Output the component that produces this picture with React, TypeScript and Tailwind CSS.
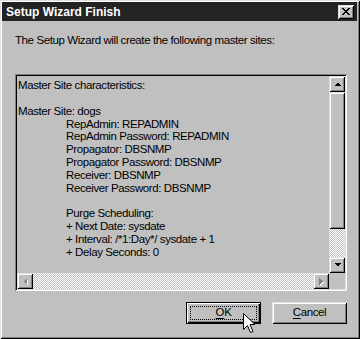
import React from "react";

const FONT = "font-['Liberation_Sans',Arial,sans-serif] text-[11.5px] tracking-[-0.4px]";

const RAISED =
  "shadow-[inset_1px_1px_0_#dfdfdf,inset_-1px_-1px_0_#000,inset_2px_2px_0_#fff,inset_-2px_-2px_0_#808080]";

function Tri({ dir, color = "#000" }: { dir: "up" | "down" | "left" | "right"; color?: string }) {
  const pts: Record<string, string> = {
    up: "0,4 7,4 3.5,0.5",
    down: "0,0 7,0 3.5,3.5",
    left: "4,0 4,7 0.5,3.5",
    right: "0,0 0,7 3.5,3.5",
  };
  const vertical = dir === "up" || dir === "down";
  return (
    <svg width={vertical ? 7 : 4} height={vertical ? 4 : 7} viewBox={vertical ? "0 0 7 4" : "0 0 4 7"}>
      <polygon points={pts[dir]} fill={color} shapeRendering="crispEdges" />
    </svg>
  );
}

function SBtn({ dir, disabled }: { dir: "up" | "down" | "left" | "right"; disabled?: boolean }) {
  return (
    <div className={`w-[16px] h-[16px] shrink-0 bg-[#c0c0c0] flex items-center justify-center ${RAISED}`}>
      {disabled ? (
        <div className="relative">
          <div className="absolute left-[1px] top-[1px]">
            <Tri dir={dir} color="#fff" />
          </div>
          <div className="relative">
            <Tri dir={dir} color="#808080" />
          </div>
        </div>
      ) : (
        <Tri dir={dir} />
      )}
    </div>
  );
}

const TRACK =
  "bg-[repeating-conic-gradient(#c0c0c0_0_25%,#ffffff_0_50%)] bg-[length:2px_2px]";

export default function App() {
  const lines: [string, boolean][] = [
    ["Master Site characteristics:", false],
    ["", false],
    ["Master Site: dogs", false],
    ["RepAdmin: REPADMIN", true],
    ["RepAdmin Password: REPADMIN", true],
    ["Propagator: DBSNMP", true],
    ["Propagator Password: DBSNMP", true],
    ["Receiver: DBSNMP", true],
    ["Receiver Password: DBSNMP", true],
    ["", false],
    ["Purge Scheduling:", true],
    ["+ Next Date: sysdate", true],
    ["+ Interval: /*1:Day*/ sysdate + 1", true],
    ["+ Delay Seconds: 0", true],
  ];

  return (
    <div
      className={`relative w-[360px] h-[339px] bg-[#c0c0c0] pt-[2px] pl-[2px] pr-[3px] pb-[3px] flex flex-col overflow-hidden ${FONT} text-black shadow-[inset_1px_1px_0_#dfdfdf,inset_-1px_-1px_0_#000,inset_2px_2px_0_#fff,inset_-2px_-2px_0_#808080]`}
    >
      {/* Title bar */}
      <div className="h-[19px] bg-[#232323] flex items-center justify-between pl-[4px] pr-[3px] shrink-0">
        <span className="font-['Liberation_Sans',Arial,sans-serif] font-bold text-[12px] tracking-normal text-white leading-none">
          Setup Wizard Finish
        </span>
        <div className={`w-[16px] h-[14px] bg-[#c0c0c0] flex items-center justify-center ${RAISED}`}>
          <svg width="8" height="7" viewBox="0 0 8 7" shapeRendering="crispEdges">
            <path d="M0 0h2v1h-2zM6 0h2v1h-2zM1 1h2v1h-2zM5 1h2v1h-2zM2 2h4v1h-4zM3 3h2v1h-2zM2 4h4v1h-4zM1 5h2v1h-2zM5 5h2v1h-2zM0 6h2v1h-2zM6 6h2v1h-2z" fill="#000" />
          </svg>
        </div>
      </div>

      {/* Body */}
      <div className="flex-1 flex flex-col pl-[13px] pr-[10px]">
        <div className="mt-[12px] h-[15px] leading-[15px] whitespace-nowrap">
          The Setup Wizard will create the following master sites:
        </div>

        {/* List box */}
        <div className="mt-[26px] h-[217px] p-[2px] flex flex-col shadow-[inset_1px_1px_0_#808080,inset_-1px_-1px_0_#fff,inset_2px_2px_0_#000,inset_-2px_-2px_0_#dfdfdf]">
          <div className="flex flex-1 min-h-0">
            <div className="flex-1 overflow-hidden pt-[3px] pl-[1px]">
              {lines.map(([t, indent], i) => (
                <div
                  key={i}
                  className={`h-[12.85px] leading-[12.85px] whitespace-nowrap ${indent ? "pl-[48px]" : ""}`}
                >
                  {t || "\u00a0"}
                </div>
              ))}
            </div>
            {/* Vertical scrollbar */}
            <div className="w-[16px] flex flex-col shrink-0">
              <SBtn dir="up" />
              <div className={`h-[137px] shrink-0 bg-[#c0c0c0] ${RAISED}`} />
              <div className={`flex-1 ${TRACK}`} />
              <SBtn dir="down" />
            </div>
          </div>
          {/* Horizontal scrollbar */}
          <div className="h-[16px] flex shrink-0">
            <SBtn dir="left" disabled />
            <div className={`flex-1 ${TRACK}`} />
            <SBtn dir="right" disabled />
            <div className="w-[16px] bg-[#c0c0c0]" />
          </div>
        </div>

        {/* Buttons */}
        <div className="mt-[11px] flex justify-end gap-[11px]">
          <div className="relative w-[75px] h-[22px] bg-[#c0c0c0] flex items-center justify-center shadow-[inset_0_0_0_1px_#000,inset_2px_2px_0_#fff,inset_-2px_-2px_0_#000,inset_-3px_-3px_0_#808080]">
            <div className="absolute left-[4px] top-[4px] right-[4px] bottom-[4px] border border-dotted border-black" />
            <span className="relative leading-none">
              <span className="underline underline-offset-2">O</span>K
            </span>
          </div>
          <div className={`w-[75px] h-[22px] bg-[#c0c0c0] flex items-center justify-center ${RAISED}`}>
            <span className="leading-none">
              <span className="underline underline-offset-2">C</span>ancel
            </span>
          </div>
        </div>
      </div>

      {/* Mouse cursor */}
      <svg
        className="absolute left-[243px] top-[313px]"
        width="13"
        height="21"
        viewBox="0 0 13 21"
      >
        <path
          d="M0.5 0.5 L0.5 16.5 L4.5 12.5 L7.5 19.5 L10 18.5 L7 11.5 L12 11.5 Z"
          fill="#fff"
          stroke="#000"
          strokeWidth="1"
          strokeLinejoin="miter"
        />
      </svg>
    </div>
  );
}
